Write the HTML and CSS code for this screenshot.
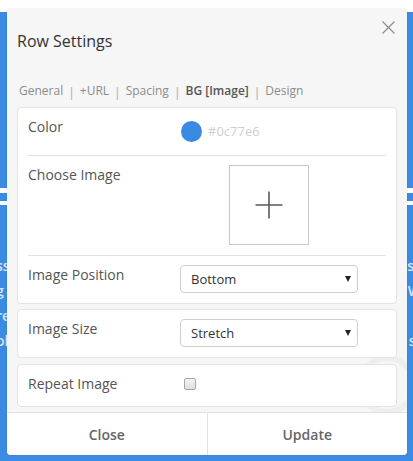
FILE: index.html
```html
<!DOCTYPE html>
<html>
<head>
<meta charset="utf-8">
<link rel="stylesheet" href="styles.css">
</head>
<body>
<div class="page">
  <div class="page-top"></div>
  <div class="page-blue">
    <div class="bg-icon"><span class="bg-bar"></span><span class="bg-bar short"></span></div>
    <div class="bg-lines">
      <div class="bg-line"><span class="bg-left">ss</span><span class="bg-right">ss</span></div>
      <div class="bg-line"><span class="bg-left">g</span><span class="bg-right">W</span></div>
      <div class="bg-line"><span class="bg-left">re</span><span class="bg-right">s</span></div>
      <div class="bg-line"><span class="bg-left">ol</span><span class="bg-right">st</span></div>
    </div>
  </div>
</div>

<div class="modal">
  <div class="modal-ring"></div>
  <button class="modal-close" aria-label="Close">
    <svg width="13" height="13" viewBox="0 0 13 13"><path d="M0.5 0.5 L12.5 12.5 M12.5 0.5 L0.5 12.5" stroke="#8a8a8a" stroke-width="1.1" fill="none"/></svg>
  </button>
  <h2 class="modal-title">Row Settings</h2>
  <nav class="tabs">
    <span class="tab">General</span><span class="tab-sep">|</span><span class="tab">+URL</span><span class="tab-sep">|</span><span class="tab">Spacing</span><span class="tab-sep">|</span><span class="tab tab-active">BG [Image]</span><span class="tab-sep">|</span><span class="tab">Design</span>
  </nav>

  <div class="modal-body">
    <div class="card">
      <div class="field">
        <div class="field-label">Color</div>
        <div class="field-value">
          <span class="swatch"></span><span class="swatch-text">#0c77e6</span>
        </div>
      </div>
      <div class="field field-sep">
        <div class="field-label">Choose Image</div>
        <div class="field-value field-value-center">
          <div class="image-picker">
            <svg width="28" height="28" viewBox="0 0 28 28"><path d="M14 0.5 V27.5 M0.5 14 H27.5" stroke="#5a5a5a" stroke-width="1.6" fill="none"/></svg>
          </div>
        </div>
      </div>
      <div class="field field-sep">
        <div class="field-label">Image Position</div>
        <div class="field-value">
          <div class="select"><span>Bottom</span><span class="caret"></span></div>
        </div>
      </div>
    </div>

    <div class="card">
      <div class="field">
        <div class="field-label">Image Size</div>
        <div class="field-value">
          <div class="select"><span>Stretch</span><span class="caret"></span></div>
        </div>
      </div>
    </div>

    <div class="card card-last">
      <div class="field field-tall">
        <div class="field-label">Repeat Image</div>
        <div class="field-value field-value-short">
          <input type="checkbox" class="checkbox">
        </div>
      </div>
    </div>
  </div>

  <div class="modal-footer">
    <button class="footer-btn">Close</button>
    <button class="footer-btn footer-btn-right">Update</button>
  </div>
</div>
</body>
</html>
```

FILE: styles.css
```css
* { box-sizing: border-box; }

html, body {
  margin: 0;
  padding: 0;
  width: 413px;
  height: 461px;
  overflow: hidden;
  font-family: "Open Sans", "Liberation Sans", sans-serif;
}

body {
  position: relative;
  background: #3c8be2;
}

.page {
  display: flex;
  flex-direction: column;
  height: 461px;
}

.page-top {
  height: 12px;
  background: #ffffff;
}

.page-blue {
  flex: 1;
  background: #3c8be2;
  padding-top: 176px;
  color: #d6e6f9;
}

.bg-icon {
  display: flex;
  flex-direction: column;
  gap: 8px;
  height: 65px;
}

.bg-bar {
  display: block;
  height: 5px;
  background: #ffffff;
  width: 413px;
}

.bg-bar.short {
  height: 4px;
}

.bg-lines {
  display: flex;
  flex-direction: column;
  font-size: 14px;
  font-weight: 600;
  line-height: 25px;
}

.bg-line {
  display: flex;
  justify-content: space-between;
}

.bg-left { margin-left: -4px; }
.bg-right { margin-right: -8px; }

/* Modal */
.modal {
  position: absolute;
  top: 9px;
  left: 7px;
  width: 400px;
  height: 446px;
  background: #f6f6f6;
  border-radius: 4px;
  padding: 21px 10px 0 10px;
  display: flex;
  flex-direction: column;
  overflow: hidden;
  box-shadow: 0 0 2px rgba(0,0,0,0.15);
}

.modal-ring {
  position: absolute;
  left: 350px;
  top: 346px;
  width: 60px;
  height: 60px;
  border-radius: 50%;
  border: 6px solid #eeeeee;
}

.modal-close {
  position: absolute;
  top: 12px;
  right: 12px;
  width: 13px;
  height: 13px;
  padding: 0;
  border: none;
  background: transparent;
  display: flex;
}

.modal-title {
  margin: 0;
  font-size: 16px;
  font-weight: 400;
  line-height: 22px;
  color: #333333;
}

.tabs {
  margin-top: 30px;
  font-size: 12px;
  line-height: 18px;
  color: #8c8c8c;
  display: flex;
  align-items: baseline;
  padding-left: 0;
}

.tab {
  padding: 0 2px;
}

.tab-active {
  color: #555555;
  font-weight: 600;
}

.tab-sep {
  color: #a8a8a8;
  padding: 0 3px;
  position: relative;
  top: 2px;
}

.modal-body {
  margin-top: 7px;
  display: flex;
  flex-direction: column;
  gap: 5px;
  position: relative;
}

.card {
  background: #ffffff;
  border: 1px solid #e4e4e4;
  border-radius: 4px;
  padding: 0 10px;
}

.card-last { margin-top: 1px; }

.field {
  display: grid;
  grid-template-columns: 152px 178px;
  padding: 9px 0 10px;
  align-items: start;
}

.field-tall {
  padding-bottom: 12px;
}

.field-sep {
  border-top: 1px solid #e2e2e2;
}

.field-label {
  font-size: 14px;
  line-height: 20px;
  color: #555555;
}

.field-value {
  height: 28px;
  display: flex;
  align-items: center;
}

.field-value-short {
  height: 20px;
}

.field-value-center {
  height: auto;
  justify-content: center;
}

.swatch {
  width: 21px;
  height: 21px;
  border-radius: 50%;
  background: #3a89e2;
  margin-left: 1px;
}

.swatch-text {
  margin-left: 6px;
  font-size: 13px;
  color: #cfcfcf;
}

.image-picker {
  width: 80px;
  height: 80px;
  border: 1px solid #c8c8c8;
  display: flex;
  align-items: center;
  justify-content: center;
  background: #ffffff;
}

.select {
  width: 178px;
  height: 28px;
  border: 1px solid #cfcfcf;
  border-radius: 4px;
  display: flex;
  align-items: center;
  justify-content: space-between;
  padding: 0 6px 0 10px;
  font-size: 13px;
  color: #333333;
  background: #ffffff;
}

.caret {
  width: 0;
  height: 0;
  border-left: 3px solid transparent;
  border-right: 3px solid transparent;
  border-top: 6px solid #222222;
  margin-top: -1px;
}

.checkbox {
  appearance: none;
  -webkit-appearance: none;
  width: 12px;
  height: 12px;
  margin: 0 0 0 4px;
  border: 1px solid #a6a6a6;
  border-radius: 2px;
  background: linear-gradient(#f4f4f4, #dedede);
}

.modal-footer {
  margin: 5px -10px 0;
  flex: 1;
  display: flex;
  background: #ffffff;
  border-top: 1px solid #e2e2e2;
  position: relative;
}

.footer-btn {
  flex: 1;
  border: none;
  background: transparent;
  font-family: "Open Sans", "Liberation Sans", sans-serif;
  font-size: 14px;
  font-weight: 600;
  color: #666666;
  padding: 0;
}

.footer-btn-right {
  border-left: 1px solid #e2e2e2;
}
```
